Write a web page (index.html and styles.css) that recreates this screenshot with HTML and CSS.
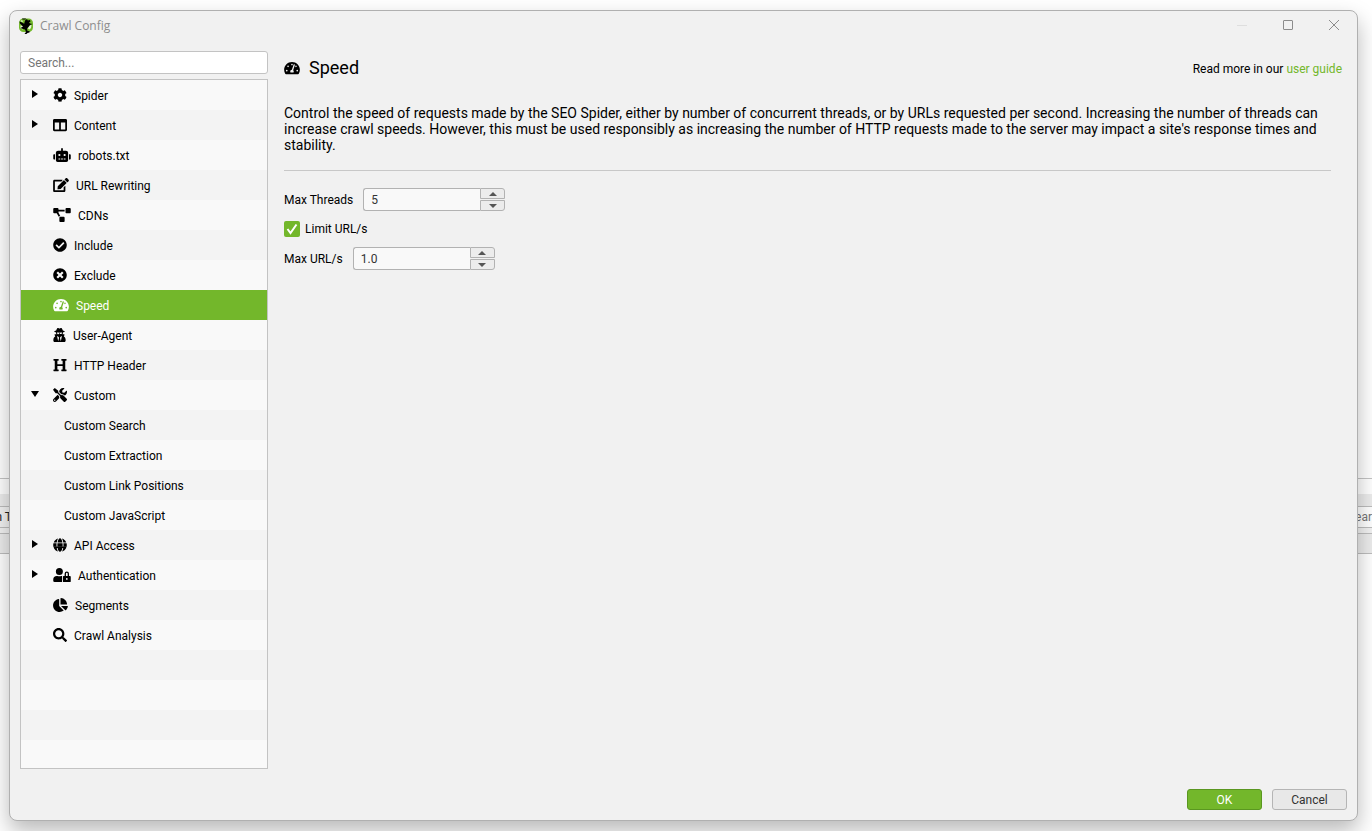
FILE: index.html
```
<!DOCTYPE html>
<html lang="en">
<head>
<meta charset="utf-8">
<meta name="viewport" content="width=device-width, initial-scale=1">
<title>Crawl Config</title>
<link rel="stylesheet" href="styles.css">
</head>
<body>
<div class="workspace" aria-hidden="true">
  <div class="workspace-upper"></div>
  <div class="workspace-strip"></div>
  <div class="workspace-gap"></div>
  <div class="workspace-tools"><span class="workspace-tab"><span>n T</span></span><span class="workspace-search">ear</span></div>
  <div class="workspace-rule"></div>
  <div class="workspace-columns"></div>
  <div class="workspace-lower"></div>
</div>

<div class="dialog" role="dialog" aria-labelledby="dialog-title">
  <header class="titlebar">
    <svg class="logo" viewBox="0 0 16 16" aria-hidden="true">
      <rect x="1" y="0.500" width="14" height="13.500" rx="4.500" fill="#74b92c"/>
      <path fill="#e6f5d4" d="M2.500 7.500l3 .5.5 2.500-1.500 1-2-1.500zM10.500 7.500l3-.5-.5 3-1.500 1.500-1.500-1zM2.500 3l1.500-1 1 1.500-1 .5z"/>
      <path fill="#000" d="M1.500 3.500l2 .8 2.700 1.500L7 2.500 9 1l.8 1.500L12 2l.5 1.500L11 4.500l1 1 2.500.5-2.500 1-1.500 2-1.500 1.500.5 2.500h2v1.500l-2 .5-1 1H6.500l1.500-2-1-2.500-2-.5L2.500 10 5 8.500 3.500 7 2 5.500z"/>
      <path fill="#000" d="M4 .5h4L7.500 1.500h-3z"/>
    </svg>
    <h1 class="dialog-title" id="dialog-title">Crawl Config</h1>
    <div class="window-buttons">
      <button class="window-button" type="button" aria-label="Minimize" disabled><svg viewBox="0 0 12 12"><path d="M1 5.500h10"/></svg></button>
      <button class="window-button" type="button" aria-label="Maximize"><svg viewBox="0 0 12 12"><rect x="1.500" y="0.500" width="9" height="9" rx="0.500"/></svg></button>
      <button class="window-button" type="button" aria-label="Close"><svg viewBox="0 0 12 12"><path d="M1 0l10 10M11 0L1 10"/></svg></button>
    </div>
  </header>

  <div class="dialog-body">
    <nav class="sidebar" aria-label="Configuration sections">
      <input class="search" type="search" placeholder="Search..." aria-label="Search">
      <ul class="tree">
        <li><button class="row" type="button" aria-expanded="false"><span class="arrow"></span><svg class="icon" viewBox="0 0 512 512"><path d="M487.400 315.700l-42.600-24.600c4.300-23.200 4.300-47 0-70.200l42.600-24.600c4.900-2.800 7.100-8.600 5.500-14-11.100-35.600-30-67.800-54.700-94.600-3.800-4.100-10-5.100-14.800-2.300L380.800 110c-17.900-15.400-38.500-27.300-60.800-35.100V25.800c0-5.600-3.900-10.500-9.400-11.700-36.700-8.200-74.300-7.800-109.200 0-5.500 1.200-9.400 6.100-9.400 11.700V75c-22.200 7.900-42.800 19.800-60.800 35.100L88.700 85.500c-4.900-2.800-11-1.900-14.800 2.300-24.700 26.700-43.600 58.900-54.700 94.600-1.700 5.400.6 11.200 5.500 14L67.300 221c-4.300 23.200-4.300 47 0 70.200l-42.600 24.600c-4.900 2.800-7.100 8.600-5.500 14 11.100 35.600 30 67.800 54.700 94.600 3.800 4.100 10 5.100 14.800 2.300l42.600-24.600c17.900 15.400 38.500 27.300 60.800 35.100v49.200c0 5.600 3.900 10.500 9.400 11.700 36.700 8.200 74.300 7.800 109.200 0 5.500-1.200 9.400-6.100 9.400-11.700v-49.200c22.200-7.900 42.800-19.800 60.800-35.100l42.600 24.600c4.900 2.800 11 1.900 14.800-2.300 24.700-26.700 43.600-58.900 54.700-94.600 1.500-5.500-.7-11.300-5.600-14.100zM256 336c-44.100 0-80-35.900-80-80s35.900-80 80-80 80 35.900 80 80-35.900 80-80 80z"/></svg><span class="row-label">Spider</span></button></li>
        <li><button class="row" type="button" aria-expanded="false"><span class="arrow"></span><svg class="icon" viewBox="0 0 512 512"><path d="M464 32H48C21.490 32 0 53.490 0 80v352c0 26.510 21.490 48 48 48h416c26.510 0 48-21.490 48-48V80c0-26.510-21.490-48-48-48zM224 416H64V160h160v256zm224 0H288V160h160v256z"/></svg><span class="row-label">Content</span></button></li>
        <li><button class="row" type="button"><svg class="icon icon-xwide" viewBox="0 0 640 512"><path d="M32 224H64V416H32A32 32 0 0 1 0 384V256A32 32 0 0 1 32 224Zm512-48V448a64 64 0 0 1-64 64H160a64 64 0 0 1-64-64V176a80 80 0 0 1 80-80H288V32a32 32 0 0 1 64 0V96H464A80 80 0 0 1 544 176ZM264 256a40 40 0 1 0-40 40A40 40 0 0 0 264 256Zm-8 128H192v32h64Zm96 0H288v32h64ZM456 256a40 40 0 1 0-40 40A40 40 0 0 0 456 256Zm-8 128H384v32h64ZM640 256V384a32 32 0 0 1-32 32H576V224h32A32 32 0 0 1 640 256Z"/></svg><span class="row-label">robots.txt</span></button></li>
        <li><button class="row" type="button"><svg class="icon icon-wide" viewBox="0 0 576 512"><path d="M402.600 83.200l90.200 90.200c3.800 3.800 3.800 10 0 13.800L274.400 405.600l-92.800 10.300c-12.400 1.400-22.900-9.100-21.500-21.500l10.300-92.800L388.800 83.200c3.800-3.800 10-3.800 13.800 0zm162-22.900l-48.800-48.800c-15.200-15.200-39.900-15.200-55.200 0l-35.400 35.400c-3.800 3.800-3.800 10 0 13.800l90.200 90.200c3.800 3.800 10 3.800 13.800 0l35.400-35.400c15.200-15.300 15.200-40 0-55.200zM384 346.200V448H64V128h229.800c3.200 0 6.200-1.300 8.500-3.500l40-40c7.600-7.600 2.200-20.500-8.500-20.500H48C21.500 64 0 85.500 0 112v352c0 26.500 21.500 48 48 48h352c26.500 0 48-21.500 48-48V306.200c0-10.700-12.900-16-20.500-8.500l-40 40c-2.200 2.300-3.500 5.300-3.500 8.500z"/></svg><span class="row-label">URL Rewriting</span></button></li>
        <li><button class="row" type="button"><svg class="icon icon-xwide" viewBox="0 0 640 512"><path d="M384 320H256c-17.670 0-32 14.330-32 32v128c0 17.670 14.330 32 32 32h128c17.670 0 32-14.330 32-32V352c0-17.670-14.330-32-32-32zM192 32c0-17.670-14.330-32-32-32H32C14.330 0 0 14.330 0 32v128c0 17.670 14.330 32 32 32h95.720l73.160 128.040C211.980 300.980 232.400 288 256 288h.28L192 175.510V128h224V64H192V32zM608 0H480c-17.670 0-32 14.330-32 32v128c0 17.670 14.330 32 32 32h128c17.670 0 32-14.330 32-32V32c0-17.670-14.330-32-32-32z"/></svg><span class="row-label">CDNs</span></button></li>
        <li><button class="row" type="button"><svg class="icon" viewBox="0 0 512 512"><path d="M504 256c0 136.967-111.033 248-248 248S8 392.967 8 256 119.033 8 256 8s248 111.033 248 248zM227.314 387.314l184-184c6.248-6.248 6.248-16.379 0-22.627l-22.627-22.627c-6.248-6.249-16.379-6.249-22.628 0L216 308.118l-70.059-70.059c-6.248-6.248-16.379-6.248-22.628 0l-22.627 22.627c-6.248 6.248-6.248 16.379 0 22.627l104 104c6.249 6.249 16.379 6.249 22.628.001z"/></svg><span class="row-label">Include</span></button></li>
        <li><button class="row" type="button"><svg class="icon" viewBox="0 0 512 512"><path d="M256 8C119 8 8 119 8 256s111 248 248 248 248-111 248-248S393 8 256 8zm121.600 313.100c4.700 4.700 4.700 12.300 0 17L338 377.600c-4.700 4.700-12.300 4.700-17 0L256 312l-65.100 65.600c-4.700 4.700-12.300 4.700-17 0L134.400 338c-4.700-4.700-4.700-12.300 0-17l65.600-65-65.600-65.100c-4.700-4.700-4.700-12.300 0-17l39.600-39.600c4.700-4.700 12.300-4.700 17 0l65 65.700 65.100-65.600c4.700-4.700 12.300-4.700 17 0l39.600 39.600c4.700 4.700 4.700 12.300 0 17L312 256l65.600 65.100z"/></svg><span class="row-label">Exclude</span></button></li>
        <li><button class="row row-selected" type="button" aria-current="page"><svg class="icon icon-wide" viewBox="0 0 576 512"><path id="gauge" d="M288 32C128.940 32 0 160.940 0 320c0 52.800 14.250 102.260 39.060 144.800 5.610 9.620 16.300 15.200 27.440 15.200h443c11.140 0 21.830-5.580 27.440-15.200C561.750 422.260 576 372.800 576 320c0-159.060-128.940-288-288-288zm0 64c14.710 0 26.580 10.130 30.320 23.650-1.110 2.260-2.640 4.230-3.450 6.670l-9.220 27.670c-5.130 3.490-10.970 6.010-17.640 6.010-17.670 0-32-14.330-32-32S270.330 96 288 96zM96 384c-17.670 0-32-14.330-32-32s14.330-32 32-32 32 14.330 32 32-14.330 32-32 32zm48-160c-17.670 0-32-14.330-32-32s14.330-32 32-32 32 14.330 32 32-14.330 32-32 32zm246.770-72.410l-61.330 184C343.130 347.330 352 364.540 352 384c0 11.720-3.380 22.550-8.880 32H232.880c-5.500-9.450-8.880-20.280-8.880-32 0-33.940 26.500-61.430 59.900-63.590l61.340-184.010c4.170-12.560 17.730-19.450 30.360-15.170 12.570 4.190 19.350 17.790 15.170 30.360zm14.660 57.200l15.520-46.550c3.470-1.290 7.130-2.230 11.050-2.230 17.670 0 32 14.330 32 32s-14.330 32-32 32c-11.380-.01-20.890-6.280-26.570-15.220zM480 384c-17.670 0-32-14.330-32-32s14.330-32 32-32 32 14.330 32 32-14.330 32-32 32z"/></svg><span class="row-label">Speed</span></button></li>
        <li><button class="row" type="button"><svg class="icon icon-narrow" viewBox="0 0 448 512"><path d="M383.900 308.300l23.900-62.600c4-10.500-3.700-21.700-15-21.700h-58.500c11-18.900 17.800-40.600 17.800-64v-.3c39.200-7.800 64-19.100 64-31.700 0-13.300-27.300-25.100-70.100-33-9.200-32.800-27-65.800-40.600-82.800-9.500-11.900-25.900-15.600-39.500-8.800l-27.600 13.800c-9 4.500-19.600 4.500-28.600 0L182.100 3.400c-13.600-6.800-30-3.100-39.500 8.800-13.500 17-31.400 50-40.600 82.800-42.700 7.900-70 19.700-70 33 0 12.600 24.800 23.900 64 31.700v.3c0 23.400 6.800 45.100 17.800 64H56.300c-11.500 0-19.200 11.700-14.700 22.300l25.800 60.200C27.300 329.800 0 372.700 0 422.400v44.800C0 491.900 20.100 512 44.800 512h358.400c24.700 0 44.800-20.100 44.800-44.800v-44.800c0-48.400-25.800-90.400-64.100-114.100zM176 480l-41.600-192 49.600 32 24 40-32 120zm96 0l-32-120 24-40 49.600-32L272 480zm41.700-298.500c-3.900 11.900-7 24.600-16.500 33.400-10.100 9.300-48 22.400-64-25-2.800-8.400-15.400-8.400-18.300 0-17 50.200-56 32.400-64 25-9.500-8.800-12.700-21.500-16.500-33.400-.8-2.500-6.300-5.700-6.300-5.800v-10.800c28.300 3.600 61 5.800 96 5.800s67.700-2.100 96-5.800v10.800c-.1.1-5.600 3.200-6.400 5.800z"/></svg><span class="row-label">User-Agent</span></button></li>
        <li><button class="row" type="button"><svg class="icon" viewBox="0 0 512 512"><path d="M448 96v320h32a16 16 0 0 1 16 16v32a16 16 0 0 1-16 16H320a16 16 0 0 1-16-16v-32a16 16 0 0 1 16-16h32V288H160v128h32a16 16 0 0 1 16 16v32a16 16 0 0 1-16 16H32a16 16 0 0 1-16-16v-32a16 16 0 0 1 16-16h32V96H32a16 16 0 0 1-16-16V48a16 16 0 0 1 16-16h160a16 16 0 0 1 16 16v32a16 16 0 0 1-16 16h-32v128h192V96h-32a16 16 0 0 1-16-16V48a16 16 0 0 1 16-16h160a16 16 0 0 1 16 16v32a16 16 0 0 1-16 16z"/></svg><span class="row-label">HTTP Header</span></button></li>
        <li>
          <button class="row" type="button" aria-expanded="true"><span class="arrow arrow-open"></span><svg class="icon" viewBox="0 0 512 512"><path d="M501.100 395.700L384 278.600c-23.100-23.100-57.600-27.600-85.400-13.900L192 158.100V96L64 0 0 64l96 128h62.100l106.600 106.600c-13.600 27.800-9.200 62.300 13.900 85.400l117.100 117.100c14.600 14.600 38.200 14.600 52.700 0l52.700-52.700c14.500-14.600 14.500-38.200 0-52.700zM331.700 225c28.300 0 54.900 11 74.900 31l19.400 19.400c15.800-6.900 30.800-16.500 43.800-29.500 37.100-37.100 49.700-89.300 37.900-136.700-2.200-9-13.500-12.100-20.100-5.500l-74.400 74.400-67.900-11.300L334 98.900l74.400-74.400c6.600-6.600 3.400-17.900-5.700-20.200-47.400-11.700-99.600.9-136.600 37.900-28.500 28.500-41.900 66.100-41.200 103.600l82.100 82.100c8.100-1.900 16.500-2.900 24.700-2.900zm-103.900 82l-56.700-56.700L18.700 402.800c-25 25-25 65.500 0 90.500s65.500 25 90.500 0l123.600-123.600c-7.600-19.900-9.900-41.600-5-62.700zM64 472c-13.200 0-24-10.800-24-24 0-13.300 10.700-24 24-24s24 10.700 24 24c0 13.200-10.700 24-24 24z"/></svg><span class="row-label">Custom</span></button>
          <ul class="subtree">
            <li><button class="row row-child" type="button"><span class="row-label">Custom Search</span></button></li>
            <li><button class="row row-child" type="button"><span class="row-label">Custom Extraction</span></button></li>
            <li><button class="row row-child" type="button"><span class="row-label">Custom Link Positions</span></button></li>
            <li><button class="row row-child" type="button"><span class="row-label">Custom JavaScript</span></button></li>
          </ul>
        </li>
        <li><button class="row" type="button" aria-expanded="false"><span class="arrow"></span><svg class="icon" viewBox="0 0 496 512"><path d="M336.500 160C322 70.700 287.800 8 248 8s-74 62.700-88.500 152h177zM152 256c0 22.200 1.200 43.500 3.300 64h185.300c2.100-20.500 3.300-41.800 3.300-64s-1.200-43.500-3.300-64H155.300c-2.100 20.500-3.300 41.800-3.300 64zm324.700-96c-28.600-67.900-86.500-120.400-158-141.600 24.400 33.800 41.200 84.700 50 141.600h108zM177.200 18.400C105.800 39.600 47.800 92.100 19.300 160h108c8.700-56.900 25.500-107.800 49.900-141.600zM487.400 192H372.700c2.100 21 3.300 42.500 3.300 64s-1.200 43-3.300 64h114.600c5.500-20.500 8.600-41.800 8.600-64s-3.100-43.500-8.500-64zM120 256c0-21.500 1.200-43 3.300-64H8.600C3.200 212.500 0 233.800 0 256s3.200 43.500 8.600 64h114.600c-2-21-3.200-42.500-3.200-64zm39.500 96c14.500 89.300 48.700 152 88.500 152s74-62.700 88.500-152h-177zm159.300 141.600c71.400-21.200 129.400-73.700 158-141.600h-108c-8.800 56.900-25.600 107.800-50 141.600zM19.300 352c28.600 67.900 86.500 120.400 158 141.600-24.400-33.800-41.200-84.700-50-141.600h-108z"/><path d="M8 310h480l-20 52H28z"/></svg><span class="row-label">API Access</span></button></li>
        <li><button class="row" type="button" aria-expanded="false"><span class="arrow"></span><svg class="icon icon-xwide" viewBox="0 0 640 512"><path d="M224 256A128 128 0 1 0 96 128a128 128 0 0 0 128 128zm96 64a63.080 63.080 0 0 1 8.100-30.500c-4.800-.5-9.500-1.500-14.500-1.500h-16.700a174.080 174.080 0 0 1-145.800 0h-16.700A134.430 134.430 0 0 0 0 422.400V464a48 48 0 0 0 48 48h280.900a63.540 63.540 0 0 1-8.900-32zm288-32h-32v-80a80 80 0 0 0-160 0v80h-32a32 32 0 0 0-32 32v160a32 32 0 0 0 32 32h224a32 32 0 0 0 32-32V320a32 32 0 0 0-32-32zM496 432a32 32 0 1 1 32-32 32 32 0 0 1-32 32zm32-144h-64v-80a32 32 0 0 1 64 0z"/></svg><span class="row-label">Authentication</span></button></li>
        <li><button class="row" type="button"><svg class="icon icon-pie" viewBox="0 0 544 512"><path d="M527.790 288H290.500l158.030 158.030c6.040 6.040 15.980 6.530 22.190.68 38.700-36.460 65.320-85.610 73.130-140.860 1.340-9.460-6.510-17.850-16.060-17.850zm-15.830-64.800C503.720 103.740 408.260 8.280 288.800.04 279.680-.59 272 7.100 272 16.240V240h223.770c9.140 0 16.820-7.680 16.190-16.800zM224 288V50.710c0-9.550-8.390-17.400-17.840-16.060C86.990 51.490-4.100 155.600.14 280.370 4.500 408.510 114.830 513.590 243.030 511.980c50.400-.63 96.970-16.870 135.260-44.030 7.900-5.600 8.420-17.230 1.570-24.080L224 288z"/></svg><span class="row-label">Segments</span></button></li>
        <li><button class="row" type="button"><svg class="icon" viewBox="0 0 512 512"><path d="M505 442.700L405.300 343c-4.500-4.500-10.600-7-17-7H372c27.600-35.300 44-79.700 44-128C416 93.100 322.900 0 208 0S0 93.100 0 208s93.100 208 208 208c48.300 0 92.700-16.400 128-44v16.300c0 6.400 2.500 12.500 7 17l99.700 99.700c9.400 9.400 24.600 9.400 33.900 0l28.300-28.300c9.400-9.400 9.400-24.600.1-34zM208 336c-70.700 0-128-57.200-128-128 0-70.700 57.200-128 128-128 70.700 0 128 57.200 128 128 0 70.700-57.200 128-128 128z"/></svg><span class="row-label">Crawl Analysis</span></button></li>
      </ul>
    </nav>

    <main class="panel">
      <div class="panel-head">
        <svg class="icon icon-wide" viewBox="0 0 576 512" aria-hidden="true"><use href="#gauge"/></svg>
        <h2 class="panel-title">Speed</h2>
        <p class="guide">Read more in our <a class="guide-link" href="#">user guide</a></p>
      </div>
      <p class="description">Control the speed of requests made by the SEO Spider, either by number of concurrent threads, or by URLs requested per second. Increasing the number of threads can increase crawl speeds. However, this must be used responsibly as increasing the number of HTTP requests made to the server may impact a site's response times and stability.</p>
      <form class="settings">
        <div class="field">
          <label for="max-threads">Max Threads</label>
          <div class="spinner">
            <input class="spinner-input" id="max-threads" type="text" inputmode="numeric" value="5">
            <div class="spinner-buttons">
              <button class="step" type="button" aria-label="Increase threads"><span class="step-up"></span></button>
              <button class="step" type="button" aria-label="Decrease threads"><span class="step-down"></span></button>
            </div>
          </div>
        </div>
        <div class="check">
          <input class="checkbox" id="limit-urls" type="checkbox" checked>
          <label for="limit-urls">Limit URL/s</label>
        </div>
        <div class="field">
          <label for="max-urls">Max URL/s</label>
          <div class="spinner">
            <input class="spinner-input" id="max-urls" type="text" inputmode="decimal" value="1.0">
            <div class="spinner-buttons">
              <button class="step" type="button" aria-label="Increase URLs per second"><span class="step-up"></span></button>
              <button class="step" type="button" aria-label="Decrease URLs per second"><span class="step-down"></span></button>
            </div>
          </div>
        </div>
      </form>
    </main>
  </div>

  <footer class="actions">
    <button class="action action-primary" type="button">OK</button>
    <button class="action" type="button">Cancel</button>
  </footer>
</div>
</body>
</html>
```

FILE: styles.css
```
* {
  box-sizing: border-box;
}

body {
  display: flex;
  min-height: 100vh;
  margin: 0;
  padding: 10px 14px 10px 9px;
  background: #fff;
  color: #000;
  font: 12px/16px Roboto, "Liberation Sans", sans-serif;
}

h1,
h2,
p,
ul {
  margin: 0;
  padding: 0;
  font-weight: 400;
}

ul {
  list-style: none;
}

button,
input {
  font: inherit;
  color: inherit;
}

/* Main window, visible around the dialog */
.workspace {
  position: absolute;
  inset: 0;
  display: flex;
  flex-direction: column;
  overflow: hidden;
}

.workspace-upper {
  flex: 478;
}

.workspace-strip {
  height: 16px;
  border-top: 1px solid #c4c4c4;
}

.workspace-gap {
  height: 12px;
  background: #ececec;
}

.workspace-tools {
  display: flex;
  justify-content: space-between;
  height: 22px;
  border: solid #bdbdbd;
  border-width: 1px 0;
  line-height: 20px;
}

.workspace-tab {
  display: flex;
  justify-content: flex-end;
  width: 12px;
  background: #f2f2f2;
  color: #222;
  white-space: nowrap;
}

.workspace-search {
  color: #757575;
}

.workspace-rule {
  height: 5px;
  background: #f2f2f2;
}

.workspace-columns {
  height: 21px;
  border: solid #bdbdbd;
  border-width: 1px 0;
  background: #ececec;
}

.workspace-lower {
  flex: 277;
}

/* Dialog window */
.dialog {
  position: relative;
  flex: 1;
  display: flex;
  flex-direction: column;
  border: 1px solid #b0b0b0;
  border-radius: 8px;
  background: #f1f1f1;
  box-shadow: 0 10px 22px rgba(0, 0, 0, 0.28);
}

.titlebar {
  display: flex;
  align-items: center;
  height: 30px;
  padding-left: 8px;
}

.logo {
  width: 16px;
  height: 16px;
}

.dialog-title {
  margin-left: 6px;
  color: #8d8d8d;
  font: 12px/16px "Open Sans", "Noto Sans", sans-serif;
}

.window-buttons {
  display: flex;
  margin-left: auto;
}

.window-button {
  display: grid;
  place-items: center;
  width: 46px;
  height: 30px;
  padding: 0;
  border: 0;
  background: none;
}

.window-button svg {
  width: 12px;
  height: 12px;
  fill: none;
  stroke: #8c8c8c;
}

.window-button:disabled svg {
  stroke: #dedede;
}

.dialog-body {
  flex: 1;
  display: flex;
  gap: 16px;
  padding: 10px 10px 0;
}

/* Section tree */
.sidebar {
  flex: 0 0 248px;
  display: flex;
  flex-direction: column;
  gap: 5px;
}

.search {
  height: 23px;
  margin: 0;
  padding: 0 7px;
  border: 1px solid #c3c3c3;
  border-radius: 3px;
  background: #fff;
  appearance: none;
}

.search::placeholder {
  color: #757575;
}

.tree {
  flex: 1;
  border: 1px solid #c3c3c3;
  background: repeating-linear-gradient(#f9f9f9 0 30px, #f3f3f3 30px 60px);
}

.row {
  display: flex;
  align-items: center;
  gap: 7px;
  position: relative;
  width: 100%;
  height: 30px;
  padding: 0 0 0 32px;
  border: 0;
  background: none;
  text-align: left;
}

.row-label {
  padding-top: 2px;
}

.row-selected {
  background: #73b72b;
  color: #fff;
}

.row-child {
  padding-left: 43px;
}

.icon {
  flex: none;
  width: 14px;
  height: 14px;
  fill: currentColor;
}

.icon-narrow {
  width: 13px;
}

.icon-pie {
  width: 15px;
}

.icon-wide {
  width: 16px;
}

.icon-xwide {
  width: 18px;
}

.arrow {
  position: absolute;
  left: 11px;
  top: 10px;
  border: solid transparent;
  border-width: 4px 0 4px 6px;
  border-left-color: #000;
}

.arrow-open {
  left: 10px;
  top: 11px;
  border-width: 6px 4px 0;
  border-color: #000 transparent transparent;
}

/* Settings panel */
.panel {
  flex: 1;
  min-width: 0;
}

.panel-head {
  display: flex;
  align-items: center;
  height: 34px;
  padding-right: 5px;
}

.panel-title {
  margin-left: 9px;
  font-size: 18px;
  line-height: 24px;
}

.guide {
  margin-left: auto;
  padding-top: 2px;
}

.guide-link {
  color: #73b72b;
  text-decoration: none;
}

.description {
  margin: 20px 16px 0 0;
  padding-bottom: 17px;
  border-bottom: 1px solid #c8c8c8;
  font-size: 14px;
  line-height: 16px;
}

.settings {
  display: flex;
  flex-direction: column;
  gap: 10px;
  padding-top: 17px;
}

.field {
  display: flex;
  align-items: center;
  gap: 10px;
}

.spinner {
  display: flex;
  width: 142px;
  height: 23px;
  color: #333;
}

.spinner-input {
  flex: 1;
  min-width: 0;
  padding: 0 7px;
  border: 1px solid #b2b2b2;
  border-right: 0;
  border-radius: 3px 0 0 3px;
  background: #f9f9f9;
}

.spinner-buttons {
  display: grid;
  grid-template-rows: 1fr 1fr;
  gap: 1px;
  width: 25px;
}

.step {
  display: grid;
  place-items: center;
  min-height: 0;
  padding: 0;
  border: 1px solid #b2b2b2;
  border-radius: 0 3px 0 0;
  background: #ececec;
}

.step:last-child {
  border-radius: 0 0 3px 0;
}

.step-up,
.step-down {
  border: solid transparent;
  border-width: 0 4px 4px;
  border-bottom-color: #555;
}

.step-down {
  border-width: 4px 4px 0;
  border-top-color: #555;
}

.check {
  display: flex;
  align-items: center;
  gap: 5px;
}

.checkbox {
  appearance: none;
  width: 16px;
  height: 16px;
  margin: 0;
  border-radius: 2px;
  background: #fff;
  border: 1px solid #b2b2b2;
}

.checkbox:checked {
  border: 0;
  background: #73b72b url("data:image/svg+xml,%3Csvg xmlns='http://www.w3.org/2000/svg' viewBox='0 0 16 16'%3E%3Cpath d='M3.500 8l3 4 6-8.500' fill='none' stroke='%23fff' stroke-width='2'/%3E%3C/svg%3E");
}

/* Footer */
.actions {
  display: flex;
  justify-content: flex-end;
  gap: 10px;
  padding: 20px 10px 10px;
}

.action {
  width: 75px;
  height: 21px;
  padding: 0;
  border: 1px solid #b5b5b5;
  border-radius: 3px;
  background: #e8e8e8;
  color: #333;
}

.action-primary {
  border-color: #5a9720;
  background: #73b72b;
  color: #fff;
}
```
